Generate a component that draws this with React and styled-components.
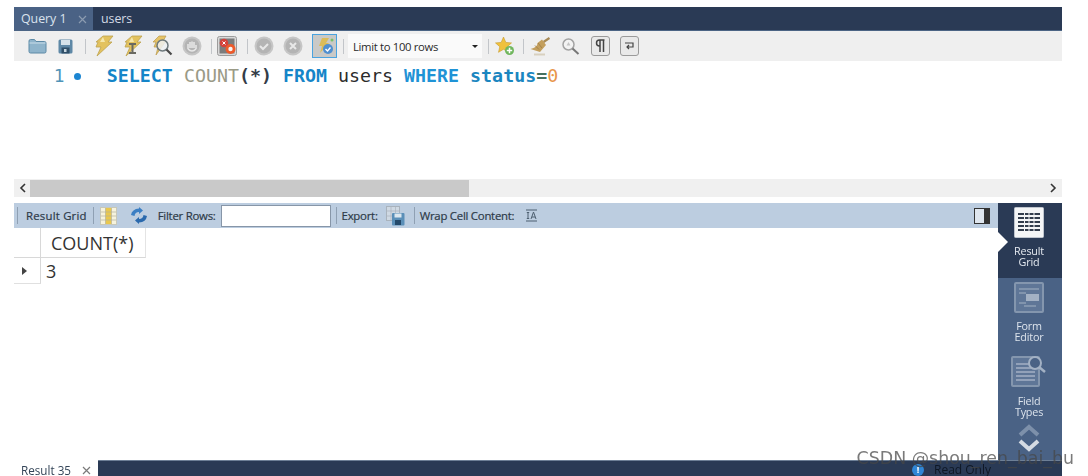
import React from 'react';
import styled, { createGlobalStyle } from 'styled-components';

const Global = createGlobalStyle`
  html, body { margin: 0; padding: 0; background: #fff; overflow: hidden; }
  body { font-family: 'Open Sans', 'Liberation Sans', sans-serif; }
  * { box-sizing: border-box; }
`;

const Shell = styled.div`
  position: relative;
  width: 1088px;
  height: 476px;
  padding: 7px 26px 0 14px;
  overflow: hidden;
`;
const Win = styled.div`
  height: 469px;
  display: flex;
  flex-direction: column;
  filter: blur(0.4px);
`;
const Tabs = styled.div`
  height: 24px;
  flex: none;
  display: flex;
  background: #2a3a55;
  border-bottom: 1px solid #4b6484;
`;
const Tab = styled.div`
  width: ${(p) => p.$w}px;
  display: flex;
  align-items: center;
  padding: 0 0 1px ${(p) => (p.$active ? 7 : 8)}px;
  gap: 12px;
  font-size: 12.4px;
  letter-spacing: -0.05px;
  color: ${(p) => (p.$active ? '#dbe3ee' : '#d5dbe5')};
  background: ${(p) => (p.$active ? '#4a6285' : 'transparent')};
  svg { margin-top: 2px; }
`;
const Toolbar = styled.div`
  height: 30px;
  flex: none;
  background: #efefef;
  display: flex;
  align-items: center;
  padding-left: 12px;
`;
const Slot = styled.div`
  width: ${(p) => p.$w}px;
  height: 24px;
  flex: none;
  display: flex;
  align-items: center;
  justify-content: center;
`;
const Sep = styled.div`
  width: 1px;
  height: ${(p) => p.$h || 15}px;
  flex: none;
  margin: 0 ${(p) => p.$r || 0}px 0 ${(p) => p.$l || 0}px;
  background: ${(p) => p.$c || '#c2c5c9'};
`;
const Focus = styled(Slot)`
  border: 1px solid #4aa3df;
  background: #c9c9c7;
`;
const Select = styled.div`
  width: 134px;
  height: 24px;
  flex: none;
  background: #fafafa;
  display: flex;
  align-items: center;
  justify-content: space-between;
  padding: 0 4px 0 5px;
  font-size: 11.3px;
  color: #2a2a2a;
  letter-spacing: -0.33px;
`;
const Caret = styled.span`
  width: 0;
  height: 0;
  border-left: 3px solid transparent;
  border-right: 3px solid transparent;
  border-top: 3px solid #222;
`;
const Editor = styled.div`
  height: 118px;
  flex: none;
  background: #fff;
  display: flex;
  align-items: flex-start;
  padding: 3px 0 0 40px;
  font-family: 'DejaVu Sans Mono', monospace;
  font-size: 18.3px;
  line-height: 24px;
  white-space: pre;
`;
const LineNo = styled.span`
  color: #4f93b8;
  font-family: 'DejaVu Sans', sans-serif;
  font-size: 17px;
`;
const Dot = styled.span`
  width: 7px;
  height: 7px;
  border-radius: 50%;
  background: #1c86d2;
  margin: 9px 26px 0 9px;
  flex: none;
`;
const Tok = styled.span`
  color: ${(p) => p.$c};
  font-weight: ${(p) => (p.$b ? 700 : 400)};
`;
const ScrollRow = styled.div`
  height: 18px;
  flex: none;
  background: #f0f0f0;
  display: flex;
  align-items: center;
  justify-content: space-between;
  padding: 0 5px;
`;
const Thumb = styled.div`
  width: 439px;
  height: 17px;
  background: #c9c9c9;
  margin: 0 auto 0 3px;
`;
const Gap = styled.div`
  height: 6px;
  flex: none;
  background: #fff;
`;
const Lower = styled.div`
  flex: 1;
  min-height: 0;
  display: flex;
`;
const ResultPane = styled.div`
  flex: 1;
  min-width: 0;
  display: flex;
  flex-direction: column;
`;
const ResultBar = styled.div`
  height: 25px;
  flex: none;
  background: #bccde0;
  display: flex;
  align-items: center;
  padding: 0 8px 0 3px;
  font-size: 11.4px;
  letter-spacing: -0.25px;
  color: #2d3a48;
  -webkit-text-stroke: 0.2px #2d3a48;
`;
const BarLabel = styled.span`
  margin: 0 ${(p) => p.$mr || 0}px 0 ${(p) => p.$ml || 0}px;
  letter-spacing: ${(p) => p.$ls ?? -0.25}px;
  white-space: nowrap;
`;
const FilterBox = styled.div`
  width: 110px;
  height: 22px;
  flex: none;
  background: #fff;
  border: 1px solid #8796a8;
  margin-left: 5px;
`;
const Spacer = styled.div`
  flex: 1;
`;
const Grid = styled.div`
  display: grid;
  grid-template-columns: 27px 105px;
  grid-template-rows: 30px 26px;
  width: 132px;
  font-size: 18px;
  color: #333;
`;
const Cell = styled.div`
  display: flex;
  align-items: center;
  justify-content: ${(p) => (p.$center ? 'center' : 'flex-start')};
  padding-left: ${(p) => (p.$center ? 0 : p.$pad || 5)}px;
  padding-right: ${(p) => (p.$center ? 6 : 0)}px;
  padding-top: ${(p) => (p.$center ? 0 : 1)}px;
  background: #fff;
  border-right: 1px solid ${(p) => p.$br || '#d8d8d8'};
  border-bottom: 1px solid ${(p) => p.$bb || 'transparent'};
  white-space: nowrap;
`;
const RowArrow = styled.span`
  width: 0;
  height: 0;
  border-top: 4px solid transparent;
  border-bottom: 4px solid transparent;
  border-left: 5px solid #444;
`;
const Side = styled.div`
  width: 64px;
  flex: none;
  background: #4a6285;
  display: flex;
  flex-direction: column;
  align-items: center;
`;
const SideItem = styled.div`
  width: 100%;
  height: ${(p) => p.$h}px;
  flex: none;
  position: relative;
  display: flex;
  flex-direction: column;
  align-items: center;
  padding: 4px 2px 0 0;
  background: ${(p) => (p.$active ? '#2a3a55' : 'transparent')};
  color: ${(p) => (p.$active ? '#e4e9f0' : '#dce3ec')};
  font-size: 10.8px;
  line-height: 11px;
  text-align: center;
  letter-spacing: -0.2px;
`;
const Notch = styled.span`
  position: absolute;
  left: 0;
  top: 29px;
  border-top: 10px solid transparent;
  border-bottom: 10px solid transparent;
  border-left: 10px solid #fff;
`;
const SideLabel = styled.div`
  margin-top: ${(p) => p.$mt}px;
`;
const Chevrons = styled.div`
  display: flex;
  flex-direction: column;
  align-items: center;
  gap: 2px;
  padding-right: 2px;
`;
const Bottom = styled.div`
  height: 16px;
  flex: none;
  display: flex;
`;
const ResultTab = styled.div`
  width: 84px;
  flex: none;
  display: flex;
  align-items: center;
  gap: 11px;
  padding: 4px 0 0 7px;
  font-size: 11.7px;
  color: #344558;
  background: #fff;
`;
const Status = styled.div`
  flex: 1;
  background: #2a3a55;
  border-top: 1px solid #6d7f96;
  display: flex;
  align-items: center;
  padding: 2px 0 0 814px;
  gap: 10px;
  font-size: 12px;
  color: #0e1724;
`;
const Info = styled.span`
  width: 12px;
  height: 12px;
  border-radius: 50%;
  background: #2f86d6;
  color: #fff;
  font-size: 9px;
  font-weight: 700;
  line-height: 12px;
  text-align: center;
`;
const Watermark = styled.div`
  position: absolute;
  right: 14px;
  bottom: 8px;
  font-family: 'DejaVu Sans', sans-serif;
  font-size: 17.4px;
  line-height: 20px;
  color: rgba(70, 70, 70, 0.72);
  white-space: nowrap;
  filter: blur(0.3px);
`;

const Close = ({ c = '#8b9bb0', s = 9 }) => (
  <svg width={s} height={s} viewBox="0 0 9 9">
    <path d="M1 1l7 7M8 1L1 8" stroke={c} strokeWidth="1.2" />
  </svg>
);

const Folder = () => (
  <svg width="19" height="16" viewBox="0 0 19 16">
    <path d="M1 3q0-1.500 1.500-1.500h4l1.500 2h8.500q1.500 0 1.500 1.500v8.500q0 1.500-1.500 1.500h-14q-1.500 0-1.500-1.500z" fill="#8fb4cb" stroke="#5d8aa6" />
    <path d="M1.500 5h16" stroke="#c9dde9" />
  </svg>
);
const Save = () => (
  <svg width="15" height="15" viewBox="0 0 15 15">
    <rect x="0.500" y="0.500" width="14" height="14" rx="1.500" fill="#5e88a6" />
    <rect x="3" y="1" width="9" height="5" fill="#d5e2ea" />
    <rect x="3.500" y="8.500" width="8" height="6" fill="#2f4f68" />
    <rect x="6" y="10" width="2.500" height="3" fill="#c7d6df" />
  </svg>
);
const Bolt = ({ cursor }) => (
  <svg width="21" height="22" viewBox="0 0 21 22">
    <path d="M10 1h10l-5 6h4L4 21l4-9H3l2-5H3z" fill="#e3c25f" stroke="#bda24f" strokeWidth="0.8" />
    <path d="M10 2l-3 5h5" fill="#f5e7ac" />
    {cursor && <path d="M7 9h7M10.500 9v9M7 18h7" stroke="#6a6a62" strokeWidth="2" fill="none" />}
  </svg>
);
const BoltGlass = () => (
  <svg width="22" height="22" viewBox="0 0 22 22">
    <path d="M8 1h7l-3 5h3L5 20l2-8H3l2-5H2z" fill="#e6c467" stroke="#b99a4a" strokeWidth="0.7" />
    <circle cx="11.500" cy="10.500" r="5.500" fill="#eef1f2" fillOpacity="0.85" stroke="#6f7a7d" strokeWidth="1.500" />
    <path d="M15.500 14.500l5 5" stroke="#4a4a4a" strokeWidth="2.200" />
  </svg>
);
const Round = ({ children }) => (
  <svg width="20" height="20" viewBox="0 0 20 20">
    <circle cx="10" cy="10" r="9.500" fill="#c6c6c6" />
    <circle cx="10" cy="10" r="7.500" fill="#b4b4b4" />
    {children}
  </svg>
);
const Stop = () => (
  <svg width="20" height="20" viewBox="0 0 20 20">
    <rect x="0.500" y="0.500" width="19" height="19" rx="2" fill="#d9d9d9" stroke="#9c9c9c" />
    <rect x="2.500" y="2.500" width="15" height="15" fill="#7c7c7c" />
    <circle cx="7" cy="7" r="4.300" fill="#d4413a" />
    <path d="M5.500 5.500l3 3M8.500 5.500l-3 3" stroke="#fff" />
    <circle cx="13.500" cy="13" r="5" fill="#ee5a2a" />
    <circle cx="13.500" cy="13" r="2.200" fill="#f4f4f4" />
  </svg>
);
const AutoCommit = () => (
  <svg width="20" height="20" viewBox="0 0 20 20">
    <path d="M7 2h7l-3 5h3L5 17l2-7H4z" fill="#dcbc58" />
    <circle cx="13" cy="13" r="5" fill="#4f8fd0" />
    <path d="M10.500 13l2 2 3-3.500" stroke="#fff" strokeWidth="1.400" fill="none" />
    <circle cx="17" cy="4" r="1.500" fill="#78c267" />
  </svg>
);
const StarAdd = () => (
  <svg width="20" height="20" viewBox="0 0 20 20">
    <path d="M8.500 1l2.300 5.400 5.700.500-4.300 3.800 1.300 5.600-5-3-5 3 1.300-5.600L.5 6.900l5.700-.5z" fill="#f0c13c" stroke="#c79a2a" strokeWidth="0.6" />
    <circle cx="14.500" cy="14.500" r="4.500" fill="#6fb65c" />
    <path d="M14.500 11.800v5.400M11.800 14.500h5.400" stroke="#fff" strokeWidth="1.500" />
  </svg>
);
const Broom = () => (
  <svg width="20" height="19" viewBox="0 0 20 19">
    <path d="M19.500 1l-6 4" stroke="#a88a55" strokeWidth="2.200" />
    <path d="M12 2.500l4 5.500-6 7-9.500-3q7-1.500 7-6z" fill="#c39f5d" />
    <path d="M5 8.500l4 4M8 6l4 5" stroke="#a5834a" />
    <path d="M4 17.500h11" stroke="#d8d0bf" strokeWidth="2" />
  </svg>
);
const Magnifier = () => (
  <svg width="19" height="18" viewBox="0 0 19 18">
    <circle cx="7.500" cy="7.500" r="5.500" fill="#f3f3f3" stroke="#a3a3a3" strokeWidth="1.500" />
    <path d="M7.500 5l2 3.500h-4z" fill="#c4c4c4" />
    <path d="M11.500 11.500l6 5.500" stroke="#777" strokeWidth="2" />
  </svg>
);
const KeyBtn = ({ children }) => (
  <svg width="19" height="20" viewBox="0 0 19 20">
    <rect x="0.500" y="0.500" width="18" height="19" rx="2.500" fill="#e9e9e9" stroke="#9a9a9a" />
    {children}
  </svg>
);
const ColsIcon = () => (
  <svg width="17" height="18" viewBox="0 0 17 18">
    <rect x="0.500" y="0.500" width="16" height="17" fill="#f6f3dd" stroke="#c8c8b8" />
    <rect x="5.500" y="1" width="6" height="16" fill="#e9c84e" />
    <path d="M1 5h15M1 9h15M1 13h15M5.500 1v16M11.500 1v16" stroke="#b5b39c" strokeWidth="0.7" />
  </svg>
);
const Refresh = () => (
  <svg width="22" height="17" viewBox="-4 0 22 17">
    <path d="M1 8q1-6 8-6.500V0l4 3.500L9 7V5Q5 5 4.500 9z" fill="#3b7fc4" />
    <path d="M17 9q-1 6-8 6.500V17l-4-3.500L9 10v2q4 0 4.500-4z" fill="#2a69ad" />
  </svg>
);
const ExportIcon = () => (
  <svg width="19" height="20" viewBox="0 0 19 20">
    <rect x="0.500" y="0.500" width="13" height="14" fill="#cfd9e3" stroke="#a9b3bd" />
    <path d="M5 1v13M9.500 1v13M1 5h12M1 10h12" stroke="#a9b3bd" strokeWidth="0.7" />
    <rect x="6" y="7" width="12.500" height="12.500" rx="1" fill="#5a8fb8" />
    <rect x="8.500" y="7.500" width="7" height="4" fill="#dbe7ef" />
    <rect x="9" y="14" width="6" height="5" fill="#24496a" />
  </svg>
);
const WrapIcon = () => (
  <svg width="13" height="13" viewBox="0 0 13 13">
    <path d="M1 1h11M1 12h11M3 3.500v6M1.800 3.500h2.400M1.800 9.500h2.400" stroke="#4d5f70" />
    <path d="M6 10l2.500-7L11 10M7 8h3" stroke="#4d5f70" fill="none" />
  </svg>
);
const PanelToggle = () => (
  <svg width="16" height="16" viewBox="0 0 16 16">
    <rect x="0.500" y="0.500" width="15" height="15" fill="#dfe6ee" stroke="#333" />
    <rect x="10" y="1" width="5" height="14" fill="#333" />
  </svg>
);
const GridIcon = () => (
  <svg width="30" height="31" viewBox="0 0 30 31">
    <rect x="0.500" y="0.500" width="29" height="30" rx="1" fill="#f4f5f6" stroke="#bfc5ce" />
    {[7, 11, 15, 19, 23].map((y) => <path key={y} d={`M4 ${y}h22`} stroke="#333d4c" strokeWidth="2" />)}
    <path d="M10.500 6v18M15 6v18M20 6v18" stroke="#f4f5f6" />
  </svg>
);
const FormIcon = () => (
  <svg width="30" height="31" viewBox="0 0 30 31">
    <rect x="1" y="1" width="28" height="29" rx="1" fill="#5f7697" stroke="#8496ae" strokeWidth="2" />
    <path d="M5 7h20M5 11h7M5 21h7M10 24h12" stroke="#a3b1c4" strokeWidth="1.200" />
    <rect x="12" y="12" width="13" height="7" fill="#a3b1c4" />
  </svg>
);
const FieldIcon = () => (
  <svg width="36" height="33" viewBox="0 0 36 33">
    <rect x="1" y="3" width="27" height="29" rx="1" fill="#5f7697" stroke="#8496ae" strokeWidth="2" />
    {[10, 14, 18, 22, 26].map((y) => <path key={y} d={`M5 ${y}h19`} stroke="#a3b1c4" strokeWidth="1.500" />)}
    <circle cx="24" cy="9" r="6" fill="#4a6285" stroke="#a3b1c4" strokeWidth="2" />
    <path d="M28 13l6 5" stroke="#a3b1c4" strokeWidth="2.500" />
  </svg>
);
const Chevron = ({ d, c }) => (
  <svg width="22" height="13" viewBox="0 0 22 13">
    <path d={d} stroke={c} strokeWidth="4" fill="none" />
  </svg>
);
const Arrow = ({ d }) => (
  <svg width="8" height="10" viewBox="0 0 8 10">
    <path d={d} stroke="#333" strokeWidth="1.600" fill="none" />
  </svg>
);

export default function App() {
  return (
    <Shell>
      <Global />
      <Win>
        <Tabs>
          <Tab $active $w={79}>Query 1 <Close /></Tab>
          <Tab>users</Tab>
        </Tabs>
        <Toolbar>
          <Slot $w={22}><Folder /></Slot>
          <Slot $w={35}><Save /></Slot>
          <Sep $l={2} $r={1} />
          <Slot $w={32}><Bolt /></Slot>
          <Slot $w={27}><Bolt cursor /></Slot>
          <Slot $w={32}><BoltGlass /></Slot>
          <Slot $w={27}>
            <Round><path d="M6 13V8M8 12V6M10 12V5.500M12 12V6M14 13V9M6 13q4 4 8 0" stroke="#e8e8e8" strokeWidth="1.500" fill="none" /></Round>
          </Slot>
          <Sep $l={6} $r={4} />
          <Slot $w={22}><Stop /></Slot>
          <Sep $l={9} $r={6} />
          <Slot $w={20}><Round><path d="M6 10l3 3 5-5" stroke="#e8e8e8" strokeWidth="2" fill="none" /></Round></Slot>
          <Slot $w={38}><Round><path d="M7 7l6 6M13 7l-6 6" stroke="#e8e8e8" strokeWidth="2" /></Round></Slot>
          <Focus $w={25}><AutoCommit /></Focus>
          <Sep $l={6} $r={4} />
          <Select>Limit to 100 rows <Caret /></Select>
          <Sep $l={6} $r={6} />
          <Slot $w={20}><StarAdd /></Slot>
          <Sep $l={8} $r={6} />
          <Slot $w={20}><Broom /></Slot>
          <Slot $w={40}><Magnifier /></Slot>
          <Slot $w={20}>
            <KeyBtn><path d="M12.500 4v12M9 4v12M13.500 4H8.500a3 3 0 0 0 0 6H9" stroke="#444" strokeWidth="1.500" fill="none" /></KeyBtn>
          </Slot>
          <Slot $w={39}>
            <KeyBtn><path d="M5 7h8v4H7M9 9l-2 2 2 2" stroke="#444" strokeWidth="1.200" fill="none" /></KeyBtn>
          </Slot>
        </Toolbar>
        <Editor>
          <LineNo>1</LineNo>
          <Dot />
          <span>
            <Tok $c="#1585c8" $b>SELECT</Tok> <Tok $c="#9a9a86">COUNT</Tok><Tok $c="#333d48" $b>(*)</Tok> <Tok $c="#1585c8" $b>FROM</Tok> <Tok $c="#2b2b2b">users</Tok> <Tok $c="#1f93d6" $b>WHERE</Tok> <Tok $c="#1b86c0" $b>status</Tok><Tok $c="#44705f" $b>=</Tok><Tok $c="#e8964a">0</Tok>
          </span>
        </Editor>
        <ScrollRow>
          <Arrow d="M6 1L2 5l4 4" />
          <Thumb />
          <Arrow d="M2 1l4 4-4 4" />
        </ScrollRow>
        <Gap />
        <Lower>
          <ResultPane>
            <ResultBar>
              <Sep $h={17} $c="#8fa0b3" />
              <BarLabel $ml={8} $ls={0.2}>Result Grid</BarLabel>
              <Sep $h={17} $l={6} $r={6} $c="#8fa0b3" />
              <ColsIcon />
              <Slot $w={41}><Refresh /></Slot>
              <BarLabel>Filter Rows:</BarLabel>
              <FilterBox />
              <Sep $h={17} $l={5} $r={5} $c="#8fa0b3" />
              <BarLabel>Export:</BarLabel>
              <Slot $w={36}><ExportIcon /></Slot>
              <Sep $h={17} $r={5} $c="#8fa0b3" />
              <BarLabel>Wrap Cell Content:</BarLabel>
              <Slot $w={35}><WrapIcon /></Slot>
              <Spacer />
              <PanelToggle />
            </ResultBar>
            <Grid>
              <Cell $bb="#d8d8d8" />
              <Cell $bb="#d8d8d8" $br="#e4e4e4" $pad={10}>COUNT(*)</Cell>
              <Cell $center $bb="#e0e0e0"><RowArrow /></Cell>
              <Cell $br="transparent">3</Cell>
            </Grid>
          </ResultPane>
          <Side>
            <SideItem $active $h={75}>
              <GridIcon />
              <SideLabel $mt={7}>Result<br />Grid</SideLabel>
              <Notch />
            </SideItem>
            <SideItem $h={72}>
              <FormIcon />
              <SideLabel $mt={7}>Form<br />Editor</SideLabel>
            </SideItem>
            <SideItem $h={74}>
              <FieldIcon />
              <SideLabel $mt={8}>Field<br />Types</SideLabel>
            </SideItem>
            <Chevrons>
              <Chevron d="M2 11l9-8 9 8" c="#7d90aa" />
              <Chevron d="M2 2l9 8 9-8" c="#d5dbe3" />
            </Chevrons>
          </Side>
        </Lower>
        <Bottom>
          <ResultTab>Result 35 <Close c="#7a7a7a" /></ResultTab>
          <Status><Info>!</Info> Read Only</Status>
        </Bottom>
      </Win>
      <Watermark>CSDN @shou_ren_bai_bu</Watermark>
    </Shell>
  );
}
